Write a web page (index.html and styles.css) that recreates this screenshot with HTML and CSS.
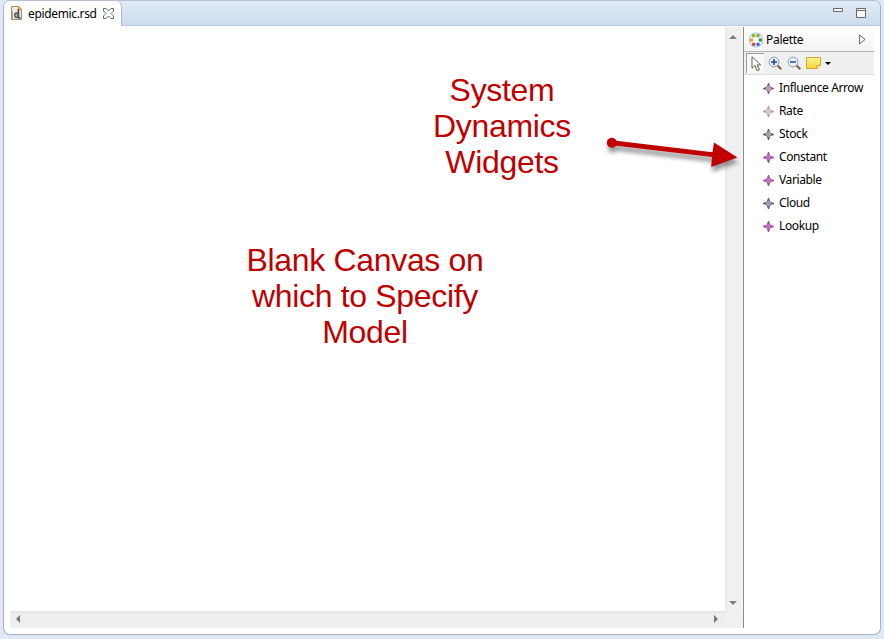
FILE: index.html
```html
<!DOCTYPE html>
<html lang="en">
<head>
<meta charset="utf-8">
<title>epidemic.rsd</title>
<link rel="stylesheet" href="styles.css">
</head>
<body>
<svg class="defs" width="0" height="0" aria-hidden="true">
  <symbol id="diamond" viewBox="0 0 11 11"><path d="M5 0H6L7.3 3.7L11 5V6L7.3 7.3L6 11H5L3.7 7.3L0 6V5L3.7 3.7Z" fill="currentColor"/><path d="M5.5 2.3L8.7 5.5L5.5 8.7L2.3 5.5Z" class="core"/></symbol>
</svg>
<main class="editor">
  <header class="tabbar">
    <div class="tab">
      <svg class="file-icon" width="12" height="15" viewBox="0 0 12 15"><path d="M.5 .5H7.5L10.5 3.5V13.5H.5Z" fill="#eeeadd" stroke="#a28b5c"/><path d="M7.5 .5V3.5H10.5Z" fill="#e8b64e" stroke="#c98c28" stroke-width=".8"/><path d="M1.5 5V13" stroke="#aaa" /><path d="M7.4 3V12M7 11.8H9.5" stroke="#4e5159" stroke-width="1.7"/><ellipse cx="5.4" cy="9.2" rx="1.7" ry="2.4" fill="#b5b6b9" stroke="#4e5159" stroke-width="1.3"/></svg>
      <span class="tab-name">epidemic.rsd</span>
      <svg class="close" width="11" height="11" viewBox="0 0 11 11"><path d="M.5 .5H3L5.5 3L8 .5H10.5V3L8 5.5L10.5 8V10.5H8L5.5 8L3 10.5H.5V8L3 5.5L.5 3Z" fill="#fff" stroke="#666"/></svg>
    </div>
    <div class="window-tools">
      <svg width="10" height="4"><path d="M.5 .5H9.5V3.5H.5Z" fill="#fff" stroke="#686868"/></svg>
      <svg width="10" height="10"><path d="M.5 .5H9.5V9.5H.5Z" fill="#fff" stroke="#686868"/><path d="M0 2.5H10" stroke="#686868"/></svg>
    </div>
  </header>
  <div class="workspace">
    <section class="viewer">
      <div class="canvas"></div>
      <div class="vscroll">
        <svg width="8" height="4"><path d="M0 4L4 0L8 4Z" fill="#808080"/></svg>
        <svg width="8" height="4"><path d="M0 0H8L4 4Z" fill="#808080"/></svg>
      </div>
      <div class="hscroll">
        <svg width="4" height="8"><path d="M4 0V8L0 4Z" fill="#777"/></svg>
        <svg width="4" height="8"><path d="M0 0V8L4 4Z" fill="#777"/></svg>
      </div>
      <div class="corner"></div>
    </section>
    <aside class="palette">
      <div class="palette-head">
        <svg width="16" height="16" viewBox="0 0 16 16"><circle cx="8" cy="8" r="7" fill="#f5faff" stroke="#a9c9e5" stroke-width="1.1"/><g stroke-width="1.1"><circle cx="5.7" cy="3.8" r="1.2" fill="#b8db36" stroke="#87a91e"/><circle cx="10" cy="3.8" r="1.2" fill="#c5d83c" stroke="#8a9a29"/><circle cx="3.4" cy="8" r="1.2" fill="#ffc43a" stroke="#e58d13"/><circle cx="12.3" cy="8" r="1.2" fill="#50b553" stroke="#25843b"/><circle cx="5.7" cy="12.2" r="1.2" fill="#f46d51" stroke="#cf3030"/><circle cx="10" cy="12.2" r="1.2" fill="#5a98f0" stroke="#285bc3"/></g></svg>
        <span>Palette</span>
        <svg class="expand" width="7" height="11"><path d="M.6 1V10L6 5.5Z" fill="#fff" stroke="#555" stroke-width=".9"/></svg>
      </div>
      <div class="palette-tools">
        <div class="select"><svg width="12" height="16" viewBox="0 0 12 16"><path d="M1 .8V12.2L3.8 9.6L6.2 14.8L8.5 13.8L6.1 8.9H9.7Z" fill="#fff" stroke="#62604b"/><path d="M4.8 9L7 14" stroke="#dfd398"/></svg></div>
        <svg width="15" height="15" viewBox="0 0 15 15"><path d="M9 9L13.3 13.3" stroke="#80613e" stroke-width="2"/><circle cx="6" cy="6" r="4.9" fill="#e8f1fb" stroke="#929dab"/><path d="M3 6H9M6 3V9" stroke="#2448a6" stroke-width="1.6"/></svg>
        <svg width="15" height="15" viewBox="0 0 15 15"><path d="M9 9L13.3 13.3" stroke="#80613e" stroke-width="2"/><circle cx="6" cy="6" r="4.9" fill="#e8f1fb" stroke="#929dab"/><path d="M3 6H9" stroke="#2448a6" stroke-width="1.6"/></svg>
        <svg class="note" width="15" height="12" viewBox="0 0 15 12"><defs><linearGradient id="n" x2="0" y2="1"><stop stop-color="#fff59a"/><stop offset="1" stop-color="#f5d52e"/></linearGradient></defs><path d="M.5 .5H14.5V8L11 11.5H.5Z" fill="url(#n)" stroke="#d1a62c"/><path d="M11 11.5V8.5H14.5" fill="#fff2a1" stroke="#b8932e" stroke-width=".8"/></svg>
        <svg class="drop" width="6" height="3"><path d="M0 0H6L3 3Z"/></svg>
      </div>
      <ul class="items">
        <li><svg class="mauve"><use href="#diamond"/></svg><span>Influence Arrow</span></li>
        <li><svg class="pink"><use href="#diamond"/></svg><span>Rate</span></li>
        <li><svg class="gray"><use href="#diamond"/></svg><span>Stock</span></li>
        <li><svg class="purple"><use href="#diamond"/></svg><span>Constant</span></li>
        <li><svg class="purple"><use href="#diamond"/></svg><span>Variable</span></li>
        <li><svg class="slate"><use href="#diamond"/></svg><span>Cloud</span></li>
        <li><svg class="purple"><use href="#diamond"/></svg><span>Lookup</span></li>
      </ul>
    </aside>
  </div>
  <p class="callout widgets">System<br>Dynamics<br>Widgets</p>
  <p class="callout blank">Blank Canvas on<br>which to Specify<br>Model</p>
  <svg class="arrow" width="160" height="60"><g fill="#c00000"><circle cx="21.8" cy="22.7" r="5"/><path d="M22 20.2L122.5 32.2L124 22.5L147.5 37.5L121.2 47L122 37L22 25.2Z"/></g></svg>
</main>
</body>
</html>
```
FILE: styles.css
```css
* { box-sizing: border-box; }
body {
  margin: 0; width: 884px; height: 639px; overflow: hidden;
  padding: 0 3px 4px; background: #e1e8f5;
  font: 12px/16px "Noto Sans", "Open Sans", sans-serif; color: #000;
}
svg { display: block; flex: none; }
.defs { position: absolute; }
.editor {
  height: 635px; border: 1px solid #a9afcb; border-top-color: #b4bfd2;
  border-radius: 7px; background: #fff; display: flex; flex-direction: column;
  overflow: hidden;
}
.tabbar {
  height: 25px; flex: none; display: flex; justify-content: space-between;
  background: linear-gradient(#e0eaf4, #cbdced); border-bottom: 1px solid #bdcbdd;
}
.tab {
  width: 118px; height: 25px; background: #fff; border-right: 1px solid #acbbd0;
  border-radius: 0 6px 0 0; display: flex; align-items: center; padding-left: 7px;
}
.tab-name { width: 69px; margin-left: 5px; letter-spacing: -.35px; white-space: nowrap; }
.close { margin-left: 6px; }
.window-tools { display: flex; gap: 13px; padding: 7px 14px 0 0; }
.workspace { flex: 1; display: flex; padding: 1px 6px 6px; }
.viewer {
  width: 733px; display: grid; grid-template: 584px 17px / 715px 18px;
}
.vscroll {
  background: linear-gradient(90deg, #e8e8e8, #f0f0f0 4px); display: flex;
  flex-direction: column; align-items: center; justify-content: space-between;
  padding: 8px 1px 6px 0; border-right: 1px solid #f8f8f8;
}
.hscroll {
  background: linear-gradient(#e6e6e6, #eee 4px); display: flex; align-items: center;
  justify-content: space-between; padding: 0 7px 2px 6px;
}
.corner { background: #f0f0f0; }
.palette { width: 131px; height: 601px; border-left: 1px solid #8b8b8b; }
.palette-head {
  height: 25px; display: flex; align-items: center; padding: 1px 8px 0 4px; gap: 2px;
  background: linear-gradient(#fff, #f3f3f3); border-bottom: 1px solid #b5b5b5;
  letter-spacing: -.3px;
}
.expand { margin-left: auto; }
.palette-tools {
  height: 23px; background: #efefef; border-bottom: 1px solid #ddd;
  display: flex; align-items: center; gap: 4px; padding-left: 2px;
}
.select {
  width: 18px; height: 20px; padding: 2px 4px; background: #f8f8f8;
  border-left: 1px solid #999; border-top: 1px solid #999;
}
.items { list-style: none; margin: 2px 0 0; padding: 0; }
.items li {
  height: 23px; display: flex; align-items: center; padding-left: 19px; gap: 5px;
  letter-spacing: -.38px; white-space: nowrap;
}
.items span { padding-bottom: 2px; }
.items svg { width: 11px; height: 11px; }
.core { fill: var(--core); }
.mauve { color: #6d5d72; --core: #c79bc8; }
.pink { color: #c08ba4; --core: #cecece; }
.gray { color: #5b5b5b; --core: #a5a5a5; }
.slate { color: #5c5961; --core: #a39bc0; }
.purple { color: #95509a; --core: #c66fc2; }
.callout {
  position: absolute; margin: 0; text-align: center; white-space: nowrap;
  color: #c00000; font: 32px/36px "Liberation Sans", sans-serif; letter-spacing: -.32px;
}
.widgets { left: 422px; top: 72px; width: 160px; }
.blank { left: 235px; top: 242px; width: 260px; }
.arrow { position: absolute; left: 590px; top: 120px; filter: drop-shadow(1px 5px 2px #0006); }
```
